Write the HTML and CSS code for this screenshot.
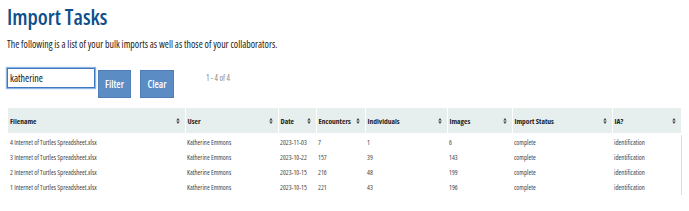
FILE: index.html
```html
<!DOCTYPE html>
<html lang="en">
<head>
<meta charset="utf-8">
<title>Import Tasks</title>
<link rel="stylesheet" href="styles.css">
</head>
<body>
<main class="page">
  <h1 class="title">Import Tasks</h1>
  <p class="intro">The following is a list of your bulk imports as well as those of your collaborators.</p>
  <div class="controls">
    <input class="search" type="text" value="katherine">
    <button class="btn btn-filter" type="button">Filter</button>
    <button class="btn btn-clear" type="button">Clear</button>
    <span class="count">1 - 4 of 4</span>
  </div>
  <table class="tasks">
    <colgroup>
      <col class="c-file"><col class="c-user"><col class="c-date"><col class="c-enc">
      <col class="c-ind"><col class="c-img"><col class="c-status"><col class="c-ia">
    </colgroup>
    <thead>
      <tr>
        <th><div class="th-in"><span>Filename</span><svg class="sort" viewBox="0 0 4 7"><path d="M0 3L2 0L4 3Z M0 4L4 4L2 7Z"/></svg></div></th>
        <th><div class="th-in"><span>User</span><svg class="sort" viewBox="0 0 4 7"><path d="M0 3L2 0L4 3Z M0 4L4 4L2 7Z"/></svg></div></th>
        <th><div class="th-in"><span>Date</span><svg class="sort" viewBox="0 0 4 7"><path d="M0 3L2 0L4 3Z M0 4L4 4L2 7Z"/></svg></div></th>
        <th><div class="th-in"><span>Encounters</span><svg class="sort" viewBox="0 0 4 7"><path d="M0 3L2 0L4 3Z M0 4L4 4L2 7Z"/></svg></div></th>
        <th><div class="th-in"><span>Individuals</span><svg class="sort" viewBox="0 0 4 7"><path d="M0 3L2 0L4 3Z M0 4L4 4L2 7Z"/></svg></div></th>
        <th><div class="th-in"><span>Images</span><svg class="sort" viewBox="0 0 4 7"><path d="M0 3L2 0L4 3Z M0 4L4 4L2 7Z"/></svg></div></th>
        <th><div class="th-in"><span>Import Status</span><svg class="sort" viewBox="0 0 4 7"><path d="M0 3L2 0L4 3Z M0 4L4 4L2 7Z"/></svg></div></th>
        <th><div class="th-in"><span>IA?</span><svg class="sort" viewBox="0 0 4 7"><path d="M0 3L2 0L4 3Z M0 4L4 4L2 7Z"/></svg></div></th>
      </tr>
    </thead>
    <tbody>
      <tr><td>4 Internet of Turtles Spreadsheet.xlsx</td><td>Katherine Emmons</td><td>2023-11-03</td><td>7</td><td>1</td><td>6</td><td>complete</td><td>identification</td></tr>
      <tr><td>3 Internet of Turtles Spreadsheet.xlsx</td><td>Katherine Emmons</td><td>2023-10-22</td><td>157</td><td>39</td><td>143</td><td>complete</td><td>identification</td></tr>
      <tr><td>2 Internet of Turtles Spreadsheet.xlsx</td><td>Katherine Emmons</td><td>2023-10-15</td><td>216</td><td>48</td><td>199</td><td>complete</td><td>identification</td></tr>
      <tr><td>1 Internet of Turtles Spreadsheet.xlsx</td><td>Katherine Emmons</td><td>2023-10-15</td><td>221</td><td>43</td><td>196</td><td>complete</td><td>identification</td></tr>
    </tbody>
  </table>
</main>
</body>
</html>
```
FILE: styles.css
```css
html, body {
  margin: 0;
  padding: 0;
  background: #ffffff;
}
body {
  font-family: "Open Sans", "Liberation Sans", sans-serif;
  font-stretch: 75%;
  color: #333;
}
.page {
  padding: 0 0 0 7px;
}
.title {
  margin: 3px 0 0 0;
  font-size: 21.5px;
  line-height: 28px;
  font-weight: 600;
  color: #0e4f8b;
}
.intro {
  margin: 7px 0 0 0;
  font-size: 9.9px;
  line-height: 12px;
  font-weight: 400;
  color: #222;
}
.controls {
  display: flex;
  align-items: flex-start;
  margin-top: 18px;
}
.search {
  box-sizing: border-box;
  width: 88px;
  height: 20px;
  margin: 0;
  padding: 0 2px;
  border: 1px solid #3f78c0;
  box-shadow: 0 0 1px 1px #8fb5e3;
  font-family: inherit;
  font-stretch: 75%;
  font-size: 10px;
  color: #111;
  outline: none;
}
.btn {
  box-sizing: border-box;
  height: 28px;
  margin: 2px 0 0 0;
  padding: 0;
  border: 1px solid #4f7fb6;
  background: #5b8cc4;
  color: #fff;
  font-family: inherit;
  font-stretch: 75%;
  font-size: 10px;
  font-weight: 600;
}
.btn-filter {
  width: 33px;
  margin-left: 3px;
}
.btn-clear {
  width: 34px;
  margin-left: 9px;
}
.count {
  margin: 5px 0 0 32px;
  font-size: 8px;
  line-height: 10px;
  color: #888;
}
.tasks {
  margin: 10px 0 0 1px;
  width: 673px;
  table-layout: fixed;
  border-collapse: collapse;
}
.c-file { width: 177px; }
.c-user { width: 93px; }
.c-date { width: 38px; }
.c-enc { width: 49px; }
.c-ind { width: 82px; }
.c-img { width: 65px; }
.c-status { width: 100px; }
.c-ia { width: 69px; }
.tasks th {
  height: 25px;
  padding: 0 5px 0 2px;
  background: #e6eeee;
  border-left: 1px solid #fff;
  border-bottom: 2px solid #fff;
  text-align: left;
  font-size: 7.5px;
  font-weight: 700;
  color: #222;
  white-space: nowrap;
}
.tasks th:first-child {
  border-left: none;
}
.th-in {
  display: flex;
  align-items: center;
  justify-content: space-between;
}
.sort {
  width: 4px;
  height: 6px;
  fill: #444;
  flex: none;
}
.tasks td {
  height: 15px;
  padding: 0 2px;
  font-size: 6.8px;
  font-weight: 400;
  color: #444;
  white-space: nowrap;
  overflow: hidden;
}
.tasks td:last-child {
  border-right: 1px solid #dcdcdc;
}
```
